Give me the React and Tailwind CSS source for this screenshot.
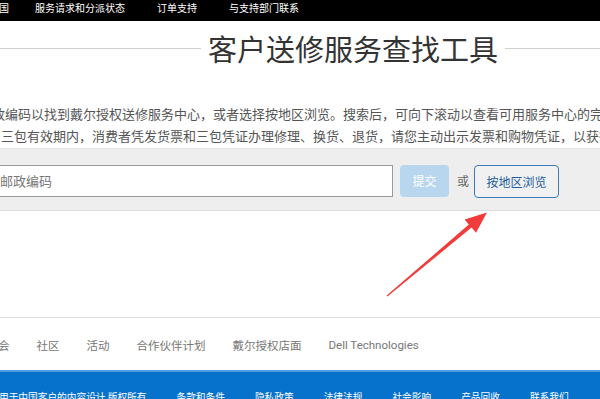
import React from 'react';

const font = { fontFamily: '"Noto Sans CJK SC", "Open Sans", sans-serif' };

const navItems = ['服务请求和分派状态', '订单支持', '与支持部门联系'];
const footerLinks = ['社区', '活动', '合作伙伴计划', '戴尔授权店面'];
const legalLinks = ['条款和条件', '隐私政策', '法律法规', '社会影响', '产品回收', '联系我们'];

const Arrow = () => (
  <svg className="absolute left-0 top-0 pointer-events-none" width="600" height="399">
    <polygon
      points="386.6,295.5 468.8,224.6 464.6,219.4 487,212.5 476,232.8 471.6,227.6 387.4,296.5"
      fill="#f23b3b"
    />
  </svg>
);

export default function App() {
  return (
    <div className="relative w-[600px] h-[399px] overflow-hidden bg-white" style={font}>
      {/* top nav */}
      <div className="h-[21px] bg-black flex items-start pt-[2px] text-[10px] leading-[12px] text-white whitespace-nowrap">
        <span className="-ml-[1px]">国</span>
        <span className="ml-[26px]">{navItems[0]}</span>
        <span className="ml-[32px]">{navItems[1]}</span>
        <span className="ml-[32px]">{navItems[2]}</span>
      </div>

      {/* title */}
      <div className="flex items-center h-[54px]">
        <div className="w-[201px] h-px bg-[#cfcfcf]" />
        <h1 className="px-[7px] text-[29px] leading-[34px] text-[#333] font-normal whitespace-nowrap">
          客户送修服务查找工具
        </h1>
        <div className="flex-1 h-px bg-[#cfcfcf]" />
      </div>

      {/* description */}
      <div className="mt-[28px] text-[13px] leading-[22px] text-[#555] whitespace-nowrap">
        <div className="-ml-[8px]">政编码以找到戴尔授权送修服务中心，或者选择按地区浏览。搜索后，可向下滚动以查看可用服务中心的完整列表。</div>
        <div className="ml-[1px]">三包有效期内，消费者凭发货票和三包凭证办理修理、换货、退货，请您主动出示发票和购物凭证，以获得服务。</div>
      </div>

      {/* search band */}
      <div className="mt-[1px] h-[63px] bg-[#eeeeee] border-t border-[#e4e4e4] border-b border-b-[#dcdcdc] flex items-start pt-[16px]">
        <div className="-ml-[20px] w-[413px] h-[32px] bg-white border border-[#9a9a9a] flex items-center pl-[19px] text-[13px] text-[#777]">
          邮政编码
        </div>
        <button className="ml-[7px] w-[49px] h-[32px] rounded-[4px] bg-[#b9d6ef] text-white text-[12px]">
          提交
        </button>
        <span className="ml-[8px] h-[32px] flex items-center text-[12px] text-[#666]">或</span>
        <button className="ml-[5px] w-[85px] h-[33px] rounded-[4px] border border-[#3d7bbd] bg-[#f1f1f1] text-[12px] text-[#1f5c9c]">
          按地区浏览
        </button>
      </div>

      {/* footer links */}
      <div className="mt-[106px] border-t border-[#dddddd] h-[53px] pt-[4px] flex items-center text-[11.5px] text-[#777] whitespace-nowrap">
        <span className="-ml-[2px]">会</span>
        {footerLinks.map((l) => (
          <span key={l} className="ml-[27px]">{l}</span>
        ))}
        <span className="ml-[27px]" style={{ fontFamily: 'Roboto, sans-serif' }}>Dell Technologies</span>
      </div>

      {/* legal bar */}
      <div className="border-t-2 border-[#4f9be0] bg-[#0672cb] h-[40px] pt-[19px] flex items-start text-[9.7px] leading-[12px] text-white whitespace-nowrap">
        <span className="-ml-[1px]">用于中国客户的内容设计 版权所有</span>
        {legalLinks.map((l) => (
          <span key={l} className="ml-[30px]">{l}</span>
        ))}
      </div>

      <Arrow />
    </div>
  );
}
